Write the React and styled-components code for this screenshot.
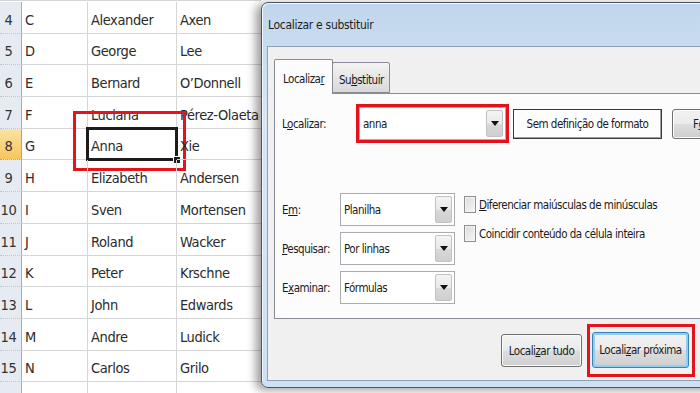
import React from "react";
import styled, {createGlobalStyle} from "styled-components";

const GlobalStyle = createGlobalStyle`
  html, body {
    margin: 0;
    padding: 0;
    background: #ffffff;
    overflow: hidden;
  }
`;

// the last row only peeks in at the bottom edge
const rows = [
    [4, "C", "Alexander", "Axen"],
    [5, "D", "George", "Lee"],
    [6, "E", "Bernard", "O’Donnell"],
    [7, "F", "Luciana", "Pérez-Olaeta"],
    [8, "G", "Anna", "Xie"],
    [9, "H", "Elizabeth", "Andersen"],
    [10, "I", "Sven", "Mortensen"],
    [11, "J", "Roland", "Wacker"],
    [12, "K", "Peter", "Krschne"],
    [13, "L", "John", "Edwards"],
    [14, "M", "Andre", "Ludick"],
    [15, "N", "Carlos", "Grilo"],
    [16, "", "", ""],
];

const Arrow = () => (
    <svg width="8" height="5" viewBox="0 0 8 5">
        <path d="M0 0 H8 L4 5 Z" fill="#111"/>
    </svg>
);

const Combo = ({value, width}) => (
    <ComboBox $width={width}>
        <ComboText>{value}</ComboText>
        <DropButton><Arrow/></DropButton>
    </ComboBox>
);

const App = () => {
    return <Screen>
        <GlobalStyle/>
        <Sheet>
            {rows.map(([n, a, b, c]) => (
                <Row key={n}>
                    <RowHead $active={n === 8}>{n < 16 ? n : ""}</RowHead>
                    <Cell $w={66}>{a}</Cell>
                    <Cell $w={89}>
                        {b}
                        {n === 8 && <>
                            <Selection><Handle/></Selection>
                            <CellMark/>
                        </>}
                    </Cell>
                    <Cell $w={90}>{c}</Cell>
                </Row>
            ))}
        </Sheet>

        <Window>
            <TitleBar>Localizar e substituir</TitleBar>
            <Client>
                <Tabs>
                    <Tab $active>Localiza<U>r</U></Tab>
                    <Tab>Su<U>b</U>stituir</Tab>
                </Tabs>
                <Panel>
                    <FindRow>
                        <FieldLabel $w={74}>L<U>o</U>calizar:</FieldLabel>
                        <RedMark>
                            <Combo value="anna" width={147}/>
                        </RedMark>
                        <FormatBox>Sem definição de formato</FormatBox>
                        <Button $w={92} $ml={10} $h={30}>F<U>o</U>rmatar...</Button>
                    </FindRow>
                    <Options>
                        <OptionGrid>
                            <FieldLabel>E<U>m</U>:</FieldLabel>
                            <Combo value="Planilha" width={115}/>
                            <FieldLabel><U>P</U>esquisar:</FieldLabel>
                            <Combo value="Por linhas" width={115}/>
                            <FieldLabel>E<U>x</U>aminar:</FieldLabel>
                            <Combo value="Fórmulas" width={115}/>
                        </OptionGrid>
                        <Checks>
                            <CheckRow><CheckBox/><span><U>D</U>iferenciar maiúsculas de minúsculas</span></CheckRow>
                            <CheckRow><CheckBox/><span>Coincidir conteúdo da célula inteira</span></CheckRow>
                        </Checks>
                    </Options>
                </Panel>
                <Footer>
                    <Button $w={81} $h={33}>Locali<U>z</U>ar tudo</Button>
                    <RedMark $pad="5px 3px 6px 2px" $ml={5}>
                        <Button $w={97} $h={36} $default>Locali<U>z</U>ar próxima</Button>
                    </RedMark>
                </Footer>
            </Client>
        </Window>
    </Screen>
}

const Screen = styled.div`
    width: 700px;
    height: 393px;
    display: flex;
    flex-direction: row;
    align-items: flex-start;
    overflow: hidden;
    background: #ffffff;
`

const Sheet = styled.div`
    flex: 0 0 261px;
    width: 261px;
    overflow: hidden;
    padding-top: 1px;
    border-top: 1px solid #d6d6d6;
    font-family: "DejaVu Sans Condensed", "Liberation Sans", sans-serif;
    font-size: 14.5px;
    letter-spacing: -0.4px;
    color: #2b2b2b;
`

const Row = styled.div`
    display: flex;
    height: 31.7px;
    box-sizing: border-box;
`

const RowHead = styled.div`
    flex: 0 0 22px;
    min-width: 0;
    overflow: hidden;
    box-sizing: border-box;
    padding: 0 4px 5px 0;
    display: flex;
    align-items: flex-end;
    justify-content: center;
    background: ${p => p.$active ? "linear-gradient(180deg, #fbe3a4 0%, #f6c55c 100%)" : "#e6ebf2"};
    border-right: 1px solid ${p => p.$active ? "#e49b39" : "#9db0c8"};
    border-bottom: 1px dotted ${p => p.$active ? "#e49b39" : "#b9c6d6"};
    color: #333;
`

const Cell = styled.div`
    position: relative;
    flex: 0 0 ${p => p.$w}px;
    min-width: 0;
    box-sizing: border-box;
    padding: 0 0 5px 3px;
    display: flex;
    align-items: flex-end;
    white-space: nowrap;
    border-right: 1px solid #d6d6d6;
    border-bottom: 1px solid #d6d6d6;
`

const Selection = styled.div`
    position: absolute;
    left: -2px;
    top: -2px;
    right: -2px;
    bottom: -2px;
    border: 3px solid #1c1c1c;
`

const Handle = styled.div`
    position: absolute;
    right: -6px;
    bottom: -6px;
    width: 6px;
    height: 6px;
    background: #1c1c1c;
    border: 1px solid #fff;
`

const CellMark = styled.div`
    position: absolute;
    left: -15px;
    top: -18px;
    right: -10px;
    bottom: -12px;
    border: 3px solid #e8121c;
`

const Window = styled.div`
    position: relative;
    flex: 0 0 452px;
    min-width: 0;
    margin-top: 2px;
    box-sizing: border-box;
    padding: 0 0 6px 5px;
    border: 1px solid #4a5666;
    border-radius: 7px 7px 0 7px;
    background: linear-gradient(180deg, #c0d6ec 0%, #d7e6f4 30%, #cfe0f2 100%);
    box-shadow: -5px 2px 10px rgba(0, 0, 0, 0.4), inset 1px 1px 0 #eef5fc;
    font-family: "DejaVu Sans Condensed", "Liberation Sans", sans-serif;
    font-size: 11.5px;
    letter-spacing: -0.5px;
    color: #1a1a1a;
    display: flex;
    flex-direction: column;
`

const TitleBar = styled.div`
    height: 43px;
    display: flex;
    align-items: center;
    padding-left: 1px;
    font-size: 12px;
    letter-spacing: -0.3px;
    color: #1e1e1e;
`

const Client = styled.div`
    min-width: 0;
    background: #f0f0f0;
    border: 1px solid #8c9fb4;
    padding: 12px 0 3px 6px;
    display: flex;
    flex-direction: column;
`

const U = styled.span`
    text-decoration: underline;
`

const Tabs = styled.div`
    display: flex;
    align-items: flex-end;
    height: 34px;
`

const Tab = styled.div`
    position: relative;
    z-index: ${p => p.$active ? 1 : 0};
    box-sizing: border-box;
    width: ${p => p.$active ? 59 : 58}px;
    height: ${p => p.$active ? 35 : 31}px;
    margin-bottom: ${p => p.$active ? -1 : 0}px;
    margin-left: ${p => p.$active ? 0 : -1}px;
    padding: 4px 0 0 ${p => p.$active ? 8 : 6}px;
    display: flex;
    align-items: center;
    white-space: nowrap;
    border: 1px solid #898c95;
    border-bottom: ${p => p.$active ? "none" : "1px solid #898c95"};
    border-radius: 2px 2px 0 0;
    background: ${p => p.$active ? "#fcfcfc" : "linear-gradient(180deg, #f3f3f3 0%, #e6e6e6 50%, #d9d9d9 100%)"};
`

const Panel = styled.div`
    min-width: 0;
    border: 1px solid #898c95;
    background: #fcfcfc;
    padding: 10px 0 14px 7px;
`

const FindRow = styled.div`
    display: flex;
    align-items: center;
`

const FieldLabel = styled.div`
    width: ${p => p.$w ? `${p.$w}px` : "auto"};
    flex: 0 0 auto;
    white-space: nowrap;
`

const RedMark = styled.div`
    flex: 0 0 auto;
    border: 3px solid #e3121b;
    padding: ${p => p.$pad || "0"};
    margin-left: ${p => p.$ml || 0}px;
    display: flex;
`

const ComboBox = styled.div`
    box-sizing: border-box;
    width: ${p => p.$width}px;
    height: 33px;
    display: flex;
    align-items: stretch;
    background: #ffffff;
    border: 1px solid #a9acb3;
`

const ComboText = styled.div`
    flex: 1;
    display: flex;
    align-items: center;
    padding-left: 3px;
    white-space: nowrap;
`

const DropButton = styled.div`
    flex: 0 0 15px;
    margin: 2px;
    display: flex;
    align-items: center;
    justify-content: center;
    border: 1px solid #c2c2c2;
    border-radius: 2px;
    background: linear-gradient(180deg, #f4f4f4 0%, #e9e9e9 50%, #d9d9d9 51%, #cfcfcf 100%);
`

const FormatBox = styled.div`
    flex: 0 0 auto;
    box-sizing: border-box;
    width: 149px;
    height: 30px;
    margin-left: 4px;
    display: flex;
    align-items: center;
    justify-content: center;
    white-space: nowrap;
    background: #fdfdfd;
    border: 1px solid #3a3a3a;
    box-shadow: inset -1px -1px 0 #a0a0a0;
`

const Button = styled.div`
    flex: 0 0 auto;
    box-sizing: border-box;
    width: ${p => p.$w}px;
    height: ${p => p.$h}px;
    margin-left: ${p => p.$ml || 0}px;
    display: flex;
    align-items: center;
    justify-content: ${p => p.$ml ? "flex-start" : "center"};
    padding-left: ${p => p.$ml ? 20 : 0}px;
    white-space: nowrap;
    border: 1px solid ${p => p.$default ? "#3c7fb1" : "#707070"};
    border-radius: 3px;
    background: linear-gradient(180deg, #f2f2f2 0%, #ebebeb 48%, #dddddd 52%, #cfcfcf 100%);
    box-shadow: ${p => p.$default ? "inset 0 0 0 2px #8fd0f2" : "inset 0 0 0 1px #fbfbfb"};
`

const Options = styled.div`
    margin-top: 50px;
    display: flex;
    align-items: flex-start;
`

const OptionGrid = styled.div`
    display: grid;
    grid-template-columns: 58px 115px;
    row-gap: 6px;
    align-items: center;
`

const Checks = styled.div`
    margin-left: 9px;
    padding-top: 3px;
    display: flex;
    flex-direction: column;
    gap: 12px;
`

const CheckRow = styled.div`
    display: flex;
    align-items: center;
    height: 17px;
    gap: 3px;
    white-space: nowrap;
`

const CheckBox = styled.div`
    box-sizing: border-box;
    width: 12px;
    height: 17px;
    border: 1px solid #8f8f8f;
    background: linear-gradient(135deg, #dcdcdc 0%, #f6f6f6 100%);
    box-shadow: inset 0 0 0 1px #f4f4f4;
`

const Footer = styled.div`
    display: flex;
    justify-content: flex-end;
    align-items: center;
    padding: 5px 16px 0 0;
`

export default App
